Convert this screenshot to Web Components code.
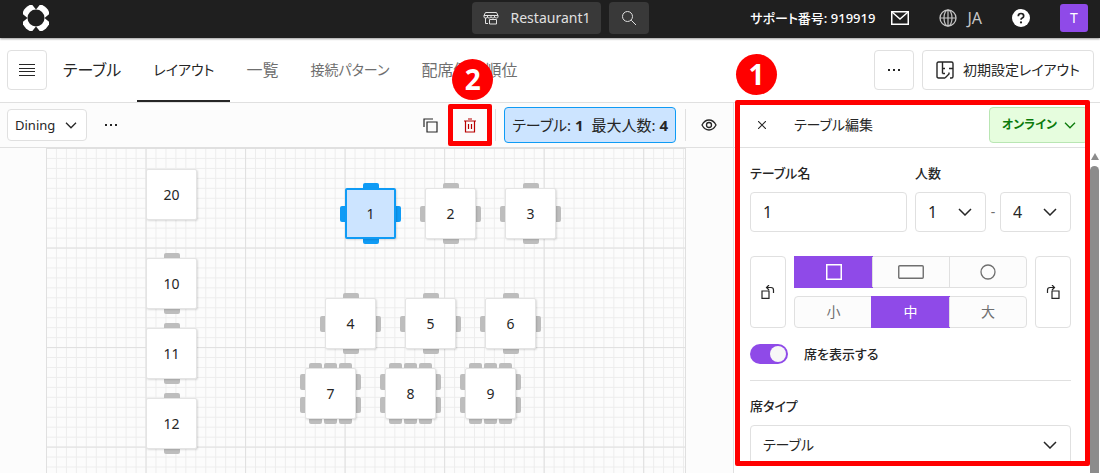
<!DOCTYPE html>
<html lang="ja">
<head>
<meta charset="utf-8">
<meta name="viewport" content="width=device-width, initial-scale=1">
<title>テーブル レイアウト</title>
<style>
  html, body { height: 100%; margin: 0; }
  body {
    display: flex; flex-direction: column; overflow: hidden;
    font: 14px/20px "Noto Sans", "Noto Sans CJK JP", sans-serif;
    font-feature-settings: "palt";
    color: #262626; background: #fff;
    --line: #e0e0e0; --accent: #8f4ae8; --blue: #0f9bf5; --blue-soft: #cce4ff; --mark: #ff0000;
  }
  main { flex: 1; min-height: 0; display: grid; grid-template-columns: minmax(0, 1fr) 367px; }
  .work { display: flex; flex-direction: column; min-height: 0; min-width: 0; }
</style>
</head>
<body>
<app-topbar></app-topbar>
<section-nav></section-nav>
<main>
  <div class="work">
    <layout-toolbar></layout-toolbar>
    <floor-canvas>
      <floor-table x="100" y="21" name="20"></floor-table>
      <floor-table x="100" y="110" name="10" rows="1"></floor-table>
      <floor-table x="100" y="180" name="11" rows="1"></floor-table>
      <floor-table x="100" y="250" name="12" rows="1"></floor-table>
      <floor-table x="299" y="40" name="1" rows="1" sides="1" selected></floor-table>
      <floor-table x="379" y="40" name="2" rows="1" sides="1"></floor-table>
      <floor-table x="459" y="40" name="3" rows="1" sides="1"></floor-table>
      <floor-table x="279" y="150" name="4" rows="1" sides="1"></floor-table>
      <floor-table x="359" y="150" name="5" rows="1" sides="1"></floor-table>
      <floor-table x="439" y="150" name="6" rows="1" sides="1"></floor-table>
      <floor-table x="259" y="220" name="7" rows="3" sides="2"></floor-table>
      <floor-table x="339" y="220" name="8" rows="3" sides="2"></floor-table>
      <floor-table x="419" y="220" name="9" rows="3" sides="2"></floor-table>
    </floor-canvas>
  </div>
  <edit-panel></edit-panel>
</main>

<script>
const BASE = `
  :host, *, *::before, *::after { box-sizing: border-box; }
  button, input, select { font: inherit; color: inherit; font-feature-settings: inherit; margin: 0; }
  button { padding: 0; border: 0; background: none; display: inline-flex; align-items: center; justify-content: center; cursor: pointer; }
  a { color: inherit; text-decoration: none; }
`;
function define(tag, render, after) {
  customElements.define(tag, class extends HTMLElement {
    connectedCallback() {
      if (this.shadowRoot) return;
      const root = this.attachShadow({ mode: "open" });
      const t = document.createElement("template");
      const { css, html } = render(this);
      t.innerHTML = `<style>${BASE}${css}</style>${html}`;
      root.append(t.content.cloneNode(true));
      if (after) after(this, root);
    }
  });
}

const ICONS = {
  logo: [26, 26, `<circle cx="13" cy="13" r="14.400" fill="#fff" stroke="none"/><path d="M8.500-1h9L13 4.500zM8.500 27h9L13 21.500zM-1 8.500v9L4.500 13zM27 8.500v9L21.500 13z" fill="#1f1f1f" stroke="none"/><circle cx="13" cy="13" r="8.500" fill="#1f1f1f" stroke="none"/>`],
  shop: [16, 14, `<path d="M2.500 1.500h11l1.500 3v1.500q0 1-1.500 1t-1.800-1q0 1-1.800 1T8 6Q8 7 6.200 7T4.500 6q0 1-1.800 1T1 6V4.500zM1 4.500h14M4.500 4.500V6M8 4.500V6M11.500 4.500V6M2.500 7v5.500H5M6.500 13V8.500h7V13z"/>`],
  search: [16, 16, `<circle cx="6.500" cy="6.500" r="5"/><path d="M10.200 10.200 15 15"/>`],
  mail: [18, 14, `<rect x=".75" y=".75" width="16.500" height="12.500" stroke-width="1.500"/><path d="m1 1 8 7 8-7" stroke-width="1.400"/>`],
  globe: [18, 18, `<circle cx="9" cy="9" r="8" stroke-width="1.300"/><ellipse cx="9" cy="9" rx="4" ry="8" stroke-width="1.200"/><path d="M9 1v16M1 9h16" stroke-width="1.200"/>`],
  help: [18, 18, `<circle cx="9" cy="9" r="9" fill="#fff" stroke="none"/><path d="M6.300 7.200q0-2.700 2.700-2.700t2.700 2.400q0 1.400-1.500 2.200-1.200.6-1.200 1.700" stroke="#1f1f1f" stroke-width="1.700"/><circle cx="9" cy="13.400" r="1.100" fill="#1f1f1f" stroke="none"/>`],
  menu: [16, 12, `<path d="M0 .500h16M0 4.500h16M0 7.500h16M0 11.500h16"/>`],
  dots: [12, 4, `<path d="M0 1h2v2H0zM5 1h2v2H5zM10 1h2v2h-2z" fill="currentColor" stroke="none"/>`],
  plan: [18, 18, `<path d="M9 17H2.500Q1 17 1 15.500V2.500Q1 1 2.500 1H15.500Q17 1 17 2.500V15.500Q17 17 15.500 17H14M6.500 1v11.500M6.500 7.500H9M6.500 12.500H9M13 7.500h4M9 17l4-4v-1.500" stroke-width="1.400"/>`],
  chevron: [12, 7, `<path d="m1 .800 5 5 5-5" stroke-width="1.300"/>`],
  chevbig: [14, 8, `<path d="m1 1 6 6 6-6" stroke-width="1.500"/>`],
  copy: [15, 15, `<path d="M4 4h10v10H4zM1 9V1h9" stroke-width="1.200"/>`],
  trash: [12, 15, `<path d="M0 3h12M1.500 3v11h9V3M4 1h4M4.500 6v5M7.500 6v5" stroke-width="1.200"/>`],
  eye: [16, 12, `<path d="M1 6q2.600-5 7-5t7 5q-2.600 5-7 5T1 6z" stroke-width="1.300"/><circle cx="8" cy="6" r="2.500" stroke-width="1.300"/>`],
  close: [8, 8, `<path d="m0 0 8 8M8 0 0 8" stroke-width="1.100"/>`],
  square: [16, 16, `<rect x=".750" y=".750" width="14.500" height="14.500" stroke-width="1.500"/>`],
  rect: [26, 14, `<rect x=".750" y=".750" width="24.500" height="12.500" rx="1" stroke-width="1.400"/>`],
  circle: [16, 16, `<circle cx="8" cy="8" r="7" stroke-width="1.300"/>`],
  ccw: [14, 14, `<path d="M1 6h7v7.400H1zM5.500 2.500h4.500q2.500 0 2.500 2.500V8M8 0 5.500 2.500 8 5" stroke-width="1.200"/>`],
  cw: [14, 14, `<path d="M6 6h7v7.400H6zM8.500 2.500H4q-2.500 0-2.500 2.500V8M6 0l2.500 2.500L6 5" stroke-width="1.200"/>`]
};
define("ui-icon", el => {
  const [w, h, body] = ICONS[el.getAttribute("name")];
  return {
    css: `:host { display: inline-flex; flex: none; } svg { display: block; }`,
    html: `<svg width="${w}" height="${h}" viewBox="0 0 ${w} ${h}" fill="none" stroke="currentColor" aria-hidden="true">${body}</svg>`
  };
});

/* Numbered callout: a red frame round its host area and a round badge. */
define("step-callout", () => ({
  css: `
    :host { position: absolute; border: 5px solid var(--mark); border-radius: 2px; pointer-events: none; z-index: 5; }
    b { position: absolute; left: var(--badge-x); top: var(--badge-y); width: 41px; height: 41px; border-radius: 50%;
      background: var(--mark); color: #fff; font: bold 28px/41px "Noto Sans", sans-serif; text-align: center; }`,
  html: `<b><slot></slot></b>`
}));

define("ui-select", el => {
  const a = n => el.getAttribute(n) || "";
  return {
    css: `
      :host { display: block; }
      .label { display: block; font-size: 13px; font-weight: 500; margin-bottom: 9px; }
      .box { display: grid; align-items: center; }
      select { grid-area: 1 / 1; appearance: none; width: 100%; height: var(--h, 40px); padding: 0 24px 0 var(--pad, 12px);
        border: 1px solid var(--edge, var(--line)); border-radius: 4px; background: var(--fill, #fff); font-size: var(--size, 16px); font-weight: var(--weight, 400); }
      ui-icon { grid-area: 1 / 1; justify-self: end; margin-right: var(--chev, 14px); pointer-events: none; }`,
    html: `${a("label") ? `<label class="label" for="s">${a("label")}</label>` : ""}
      <div class="box"><select id="s" ${a("label") ? "" : `aria-label="${a("hint")}"`}><option>${a("value")}</option></select>
      <ui-icon name="${a("icon") || "chevbig"}"></ui-icon></div>`
  };
});

define("app-topbar", () => ({
  css: `
    :host { display: grid; grid-template-columns: 1fr auto 1fr; align-items: center; height: 38px; flex: none; padding: 0 2px 2px 23px;
      background: #1f1f1f; color: #e0e0e0; box-shadow: 0 1px 2px #0006; position: relative; z-index: 1; }
    .home { justify-self: start; display: flex; }
    .mid { display: flex; gap: 8px; }
    .mid button { height: 32px; border-radius: 4px; background: #393939; padding: 0 12px; }
    .mid .shop { gap: 12px; padding: 0 11px; font-size: 14px; }
    .mid .find { width: 40px; }
    .end { justify-self: end; display: flex; align-items: center; padding-right: 10px; color: #fff; white-space: nowrap; }
    .sup { font-size: 13px; font-weight: 500; margin-right: 16px; }
    .lang { gap: 10px; margin: 0 30px; color: #c6c6c6; font-size: 16px; }
    .me { width: 28px; height: 28px; margin-left: 30px; border-radius: 3px; background: var(--accent); font-size: 14px; }`,
  html: `
    <a class="home" href="#" aria-label="ホーム"><ui-icon name="logo"></ui-icon></a>
    <div class="mid">
      <button class="shop"><ui-icon name="shop"></ui-icon>Restaurant1</button>
      <button class="find" aria-label="検索"><ui-icon name="search"></ui-icon></button>
    </div>
    <div class="end">
      <span class="sup">サポート番号: 919919</span>
      <button aria-label="メール"><ui-icon name="mail"></ui-icon></button>
      <button class="lang"><ui-icon name="globe"></ui-icon>JA</button>
      <button aria-label="ヘルプ"><ui-icon name="help"></ui-icon></button>
      <button class="me">T</button>
    </div>`
}));

define("section-nav", () => ({
  css: `
    :host { display: flex; align-items: center; flex: none; height: 65px; padding: 0 6px 0 7px; border-bottom: 1px solid var(--line); white-space: nowrap; }
    .btn { height: 40px; min-width: 40px; border: 1px solid var(--line); border-radius: 4px; background: #fff; }
    h1 { margin: 0 16px; font-size: 16px; font-weight: 400; line-height: 24px; }
    nav { display: flex; align-self: stretch; flex: 1; }
    a { display: flex; align-items: center; padding: 0 16px; font-size: 16px; color: #6f6f6f; }
    a.kana { font-size: 14px; }
    a[aria-current] { color: #262626; box-shadow: inset 0 -2px #262626; }
    .init { gap: 9px; padding: 0 13px; margin-left: 8px; font-size: 14px; }`,
  html: `
    <button class="btn" aria-label="メニュー"><ui-icon name="menu"></ui-icon></button>
    <h1>テーブル</h1>
    <nav>
      <a class="kana" href="#layout" aria-current="page">レイアウト</a>
      <a href="#list">一覧</a>
      <a class="kana" href="#links">接続パターン</a>
      <a href="#order">配席優先順位</a>
    </nav>
    <button class="btn" aria-label="その他"><ui-icon name="dots"></ui-icon></button>
    <button class="btn init"><ui-icon name="plan"></ui-icon>初期設定レイアウト</button>`
}));

define("layout-toolbar", () => ({
  css: `
    :host { display: flex; align-items: center; flex: none; height: 45px; padding: 0 8px 0 7px; border-bottom: 1px solid var(--line); background: #fcfcfc; white-space: nowrap; position: relative; }
    ui-select { width: 80px; --h: 32px; --pad: 7px; --size: 13px; --chev: 10px; }
    button { width: 32px; height: 32px; }
    .more { margin-left: 8px; }
    .gap { flex: 1; }
    .del { position: relative; margin: 0 9px 0 8px; color: #b80000; }
    step-callout { inset: -5px -6px; --badge-x: -1px; --badge-y: -50px; }
    i { width: 1px; height: 32px; background: var(--line); }
    .chip { display: flex; align-items: center; gap: 8px; height: 36px; margin: 0 9px 0 8px; padding: 0 7px; border: 1px solid var(--blue); border-radius: 4px; background: var(--blue-soft); font-size: 15px; }
    .eye { margin-left: 7px; }`,
  html: `
    <ui-select hint="エリア" value="Dining" icon="chevron"></ui-select>
    <button class="more" aria-label="その他"><ui-icon name="dots"></ui-icon></button>
    <span class="gap"></span>
    <button aria-label="複製"><ui-icon name="copy"></ui-icon></button>
    <button class="del" aria-label="削除"><ui-icon name="trash"></ui-icon><step-callout>2</step-callout></button>
    <i></i>
    <div class="chip"><span>テーブル: <b>1</b></span><span>最大人数: <b>4</b></span></div>
    <i></i>
    <button class="eye" aria-label="表示"><ui-icon name="eye"></ui-icon></button>`
}));

define("floor-canvas", () => ({
  css: `
    :host { display: block; flex: 1; min-height: 0; background: #fcfcfc; padding: 0 47px 0 46px; overflow: hidden; }
    .area { position: relative; height: 100%; border-right: 1px solid var(--line); overflow: hidden; }
    svg { display: block; width: 100%; }`,
  html: `
    <div class="area">
      <svg viewBox="0 0 642 420" aria-hidden="true">
        <defs>
          <pattern id="s" width="10" height="10" patternUnits="userSpaceOnUse"><path d="M.500 0v10M0 .500h10" stroke="#ededed" fill="none"/></pattern>
          <pattern id="l" width="100" height="100" patternUnits="userSpaceOnUse"><path d="M.500 0v100M0 .500h100" stroke="#e0e0e0" fill="none"/></pattern>
        </defs>
        <rect width="642" height="420" fill="url(#s)"/><rect width="642" height="420" fill="url(#l)"/>
      </svg>
      <slot></slot>
    </div>`
}));

define("floor-table", el => {
  const seats = n => "<i></i>".repeat(+el.getAttribute(n) || 0);
  return {
    css: `
      :host { position: absolute; display: block; width: 51px; height: 51px; --seat: #bdbdbd; }
      button { position: relative; width: 100%; height: 100%; border: 1px solid #e4e4e4; border-radius: 2px; background: #fff; box-shadow: 1px 1px 2px #0002; font-size: 14px; }
      :host([selected]) { --seat: var(--blue); }
      :host([selected]) button { border: 2px solid var(--blue); background: var(--blue-soft); }
      .rows, .sides { position: absolute; display: grid; }
      .rows { inset: -5px 2px; grid-auto-flow: column; justify-content: center; gap: 2px; }
      .sides { inset: 5px -5px; align-content: space-evenly; gap: 7px; }
      .rows i { width: 16px; border-radius: 2px; background: linear-gradient(var(--seat) 8px, transparent 8px calc(100% - 8px), var(--seat) 0); }
      .rows i:nth-last-child(3), .rows i:nth-last-child(3) ~ i { width: 13px; }
      .sides i { height: 16px; border-radius: 2px; background: linear-gradient(90deg, var(--seat) 8px, transparent 8px calc(100% - 8px), var(--seat) 0); }`,
    html: `<div class="rows">${seats("rows")}</div><div class="sides">${seats("sides")}</div><button>${el.getAttribute("name")}</button>`
  };
}, el => { el.style.left = el.getAttribute("x") + "px"; el.style.top = el.getAttribute("y") + "px"; });

define("ui-segments", el => {
  const name = el.getAttribute("name"), on = +el.getAttribute("active");
  const items = el.getAttribute("items").split(",").map((v, i) => {
    const [kind, text] = v.split(":");
    return `<label><input type="radio" name="${name}" aria-label="${text}" ${i === on ? "checked" : ""}>${kind ? `<ui-icon name="${kind}"></ui-icon>` : text}</label>`;
  }).join("");
  return {
    css: `
      :host { display: grid; grid-template-columns: repeat(3, 1fr); height: 32px; border: 1px solid var(--line); border-radius: 4px; background: #fcfcfc; color: #6f6f6f; }
      label { display: flex; align-items: center; justify-content: center; position: relative; }
      label + label { border-left: 1px solid var(--line); }
      label:has(:checked) { background: var(--accent); color: #fff; margin: -1px; border: 0; }
      label:first-child:has(:checked) { border-radius: 4px 0 0 4px; }
      input { position: absolute; inset: 0; opacity: 0; }`,
    html: items
  };
});

define("edit-panel", () => ({
  css: `
    :host { display: grid; grid-template-columns: 1fr 10px; border-left: 1px solid var(--line); min-height: 0; }
    .body { position: relative; align-self: start; }
    step-callout { inset: -3px 0 -1px 1px; --badge-x: -4px; --badge-y: -51px; }
    header { display: flex; align-items: center; height: 45px; padding-right: 2px; border-bottom: 1px solid var(--line); }
    .x { width: 32px; height: 32px; margin: 0 16px 0 12px; }
    h2 { flex: 1; margin: 0; font-size: 14px; font-weight: 400; line-height: 24px; }
    header ui-select { width: 99px; --h: 36px; --size: 12px; --weight: 600; --fill: #e6fdde; --edge: #b9e6b3; --chev: 12px; color: #0b7a0b; }
    form { display: grid; padding: 15px 19px 0 16px; }
    .names { display: grid; grid-template-columns: 1fr 8px 71px 14px 71px; align-items: end; }
    .names > :nth-child(2) { grid-column: 3; }
    .names label { display: block; font-size: 13px; font-weight: 500; margin-bottom: 9px; }
    .names input { width: 100%; height: 40px; padding: 0 12px; border: 1px solid var(--line); border-radius: 4px; font-size: 16px; }
    .dash { line-height: 40px; text-align: center; color: #6f6f6f; }
    .shape { display: grid; grid-template-columns: 36px 1fr 36px; gap: 8px; margin: 24px 0 16px; }
    .shape button { border: 1px solid var(--line); border-radius: 4px; }
    .segs { display: grid; gap: 8px; }
    .toggle { display: flex; align-items: center; gap: 16px; font-size: 13px; font-weight: 500; height: 20px; }
    .toggle input { appearance: none; width: 38px; height: 20px; padding: 2px; border-radius: 10px; background: var(--accent); display: flex; justify-content: flex-end; }
    .toggle input::before { content: ""; width: 16px; height: 16px; border-radius: 50%; background: #f7f7f7; }
    hr { width: 100%; margin: 16px 0 15px; border: 0; border-top: 1px solid var(--line); }
    .kind { --size: 14px; }
    .bar { display: flex; flex-direction: column; align-items: center; gap: 6px; margin-top: 50px; padding-right: 1px; }
    .bar::before { content: ""; border: 4px solid transparent; border-top: 0; border-bottom: 7px solid #8c8c8c; }
    .bar::after { content: ""; flex: 1; width: 100%; border-radius: 5px 5px 0 0; background: #8c8c8c; }`,
  html: `
    <div class="body">
      <header>
        <button class="x" aria-label="閉じる"><ui-icon name="close"></ui-icon></button>
        <h2>テーブル編集</h2>
        <ui-select hint="公開状態" value="オンライン" icon="chevron"></ui-select>
      </header>
      <form>
        <div class="names">
          <div><label for="n">テーブル名</label><input id="n" value="1"></div>
          <ui-select label="人数" value="1"></ui-select>
          <span class="dash">-</span>
          <ui-select hint="最大人数" value="4"></ui-select>
        </div>
        <div class="shape">
          <button type="button" aria-label="左に回転"><ui-icon name="ccw"></ui-icon></button>
          <div class="segs">
            <ui-segments name="shape" active="0" items="square:正方形,rect:長方形,circle:円"></ui-segments>
            <ui-segments name="size" active="1" items=":小,:中,:大"></ui-segments>
          </div>
          <button type="button" aria-label="右に回転"><ui-icon name="cw"></ui-icon></button>
        </div>
        <label class="toggle"><input type="checkbox" role="switch" checked>席を表示する</label>
        <hr>
        <ui-select class="kind" label="席タイプ" value="テーブル"></ui-select>
      </form>
      <step-callout>1</step-callout>
    </div>
    <div class="bar"></div>`
}));
</script>
</body>
</html>
